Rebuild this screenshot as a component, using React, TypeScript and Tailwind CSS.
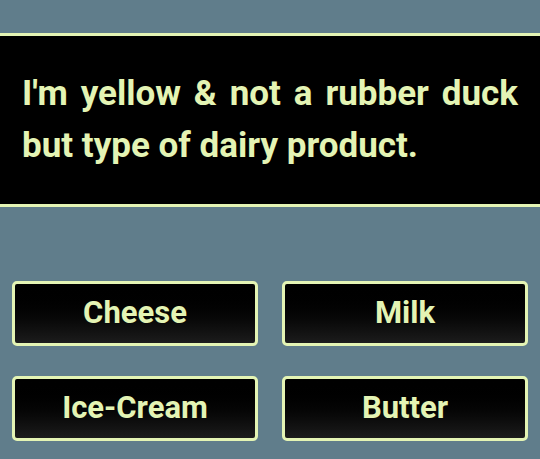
export default function App() {
  const answers = ['Cheese', 'Milk', 'Ice-Cream', 'Butter'];

  return (
    <div className="w-[540px] h-[459px] bg-[#607d8b] pt-[33px] overflow-hidden" style={{ fontFamily: 'Roboto, "Noto Sans", sans-serif' }}>
      {/* Question box */}
      <div className="bg-black border-y-[3px] border-[#e4f4b4] px-[22px] py-8">
        <p className="text-[35px] leading-[52px] font-bold text-[#e4f4b4] text-justify">
          I'm yellow &amp; not a rubber duck but type of dairy product.
        </p>
      </div>

      {/* Answers */}
      <div className="grid grid-cols-2 gap-x-6 gap-y-[30px] px-3 mt-[74px]">
        {answers.map((a) => (
          <button
            key={a}
            className="h-[65px] rounded-[5px] border-[3px] border-[#e4f4b4] bg-gradient-to-b from-black to-[#1c1c1c] text-[#e4f4b4] text-[31px] font-bold"
          >
            {a}
          </button>
        ))}
      </div>
    </div>
  );
}
